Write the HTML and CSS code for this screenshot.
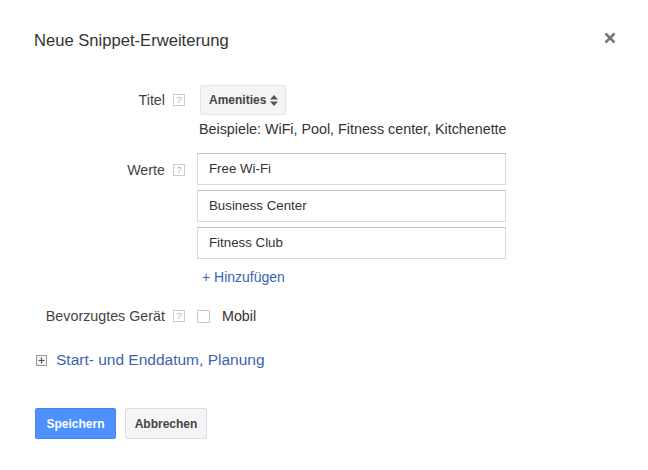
FILE: index.html
```html
<!DOCTYPE html>
<html lang="de">
<head>
<meta charset="utf-8">
<link rel="stylesheet" href="styles.css">
</head>
<body>
<div class="dialog">
  <div class="header">
    <h1 class="title">Neue Snippet-Erweiterung</h1>
    <svg class="close" width="12" height="12" viewBox="0 0 12 12"><path d="M1.5 1.5 L10.5 10.5 M10.5 1.5 L1.5 10.5" stroke="#777" stroke-width="2.6"/></svg>
  </div>
  <div class="form">
    <div class="row row-titel">
      <span class="label">Titel</span>
      <span class="help">?</span>
      <div class="control">
        <button class="select">Amenities <svg class="updown" width="8" height="11" viewBox="0 0 8 11"><path d="M4 0 L8 4.5 L0 4.5 Z M0 6.5 L8 6.5 L4 11 Z" fill="#555"/></svg></button>
      </div>
    </div>
    <div class="hint">Beispiele: WiFi, Pool, Fitness center, Kitchenette</div>
    <div class="row row-werte">
      <span class="label">Werte</span>
      <span class="help">?</span>
      <div class="control inputs">
        <div class="input">Free Wi-Fi</div>
        <div class="input">Business Center</div>
        <div class="input">Fitness Club</div>
        <a class="add">+ Hinzufügen</a>
      </div>
    </div>
    <div class="row row-geraet">
      <span class="label">Bevorzugtes Gerät</span>
      <span class="help">?</span>
      <div class="control check">
        <span class="checkbox"></span>
        <span>Mobil</span>
      </div>
    </div>
  </div>
  <div class="expander">
    <svg class="plusbox" width="11" height="11" viewBox="0 0 11 11"><rect x="0.5" y="0.5" width="10" height="10" fill="#f4f4f4" stroke="#999"/><path d="M2.5 5.5 H8.5 M5.5 2.5 V8.5" stroke="#555" stroke-width="1.2"/></svg>
    <a class="expander-link">Start- und Enddatum, Planung</a>
  </div>
  <div class="actions">
    <button class="btn btn-primary">Speichern</button>
    <button class="btn btn-default">Abbrechen</button>
  </div>
</div>
</body>
</html>
```
FILE: styles.css
```css
* { box-sizing: border-box; }
html, body { margin: 0; padding: 0; background: #fff; }
body {
  font-family: Arial, "Liberation Sans", sans-serif;
  font-size: 14.3px;
  color: #444;
}
.dialog { width: 648px; height: 470px; padding: 29px 0 0 34px; }
.header { display: flex; justify-content: space-between; align-items: center; padding-right: 32px; height: 24px; }
.title { margin: 0; font-size: 16.6px; font-weight: normal; color: #333; line-height: 24px; }
.close { display: block; margin-top: -6px; }
.form { margin-top: 32px; }
.row { display: flex; align-items: flex-start; }
.label { width: 131px; text-align: right; color: #444; line-height: 16px; white-space: nowrap; }
.help {
  width: 12px; height: 12px; margin-left: 8px; margin-top: 2px;
  border: 1px solid #ccc; color: #aaa; font-size: 9px; line-height: 10px;
  text-align: center; font-weight: normal;
}
.control { margin-left: 13px; }
.row-titel { align-items: center; height: 30px; }
.row-titel .help { margin-top: 0; }
.select {
  height: 30px; padding: 0 7px 0 8px; background: #f4f4f4; border: 1px solid #e6e6e6;
  border-radius: 2px; font-family: inherit; font-size: 12px; font-weight: bold; color: #444;
  display: flex; align-items: center; gap: 4px; margin-left: 2px;
}
.updown { display: block; }
.hint { margin: 6px 0 0 165px; line-height: 16px; color: #333; }
.row-werte { margin-top: 16px; }
.row-werte .label { margin-top: 9px; }
.row-werte .help { margin-top: 11px; }
.inputs { display: flex; flex-direction: column; gap: 5px; width: 309px; margin-left: 12px; }
.input {
  height: 32px; border: 1px solid #d9d9d9; border-top-color: #c0c0c0; padding: 0 11px;
  line-height: 30px; color: #333; font-size: 13.3px;
}
.add { color: #3b63b0; line-height: 16px; margin: 5px 0 0 5px; font-size: 14px; }
.row-geraet { margin-top: 23px; }
.check { display: flex; align-items: center; gap: 12px; margin-left: 12px; color: #333; line-height: 16px; }
.checkbox { width: 13px; height: 13px; border: 1px solid #c6c6c6; border-radius: 1px; background: #fff; }
.expander { display: flex; align-items: center; gap: 9px; margin-top: 27px; margin-left: 2px; }
.plusbox { display: block; }
.expander-link { color: #3b63b0; font-size: 15.5px; line-height: 18px; }
.actions { display: flex; gap: 9px; margin-top: 39px; margin-left: 1px; }
.btn {
  height: 31px; padding: 0; border-radius: 2px; font-family: inherit;
  font-size: 12px; font-weight: bold; text-align: center;
}
.btn-primary { background: #4d90fe; border: 1px solid #3f85f3; color: #fff; width: 81px; }
.btn-default { background: #f5f5f5; border: 1px solid #dcdcdc; color: #444; width: 82px; }
```
